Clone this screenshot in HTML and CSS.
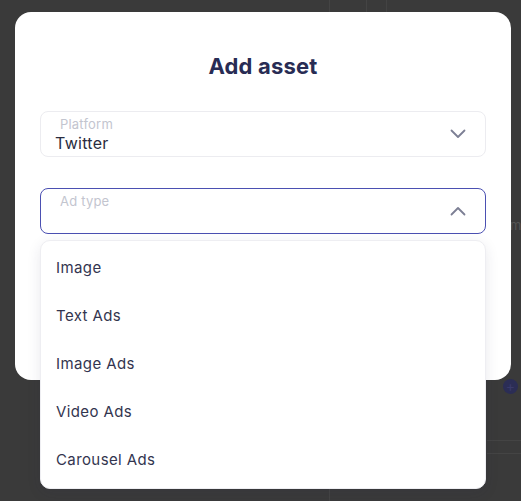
FILE: index.html
```html
<!DOCTYPE html>
<html>
<head>
<meta charset="utf-8">
<link rel="stylesheet" href="styles.css">
</head>
<body>
<div class="backdrop">
  <span class="bg-text">m</span>
  <span class="bg-plus">+</span>
</div>
<div class="modal">
  <h1 class="title">Add asset</h1>
  <div class="field">
    <div class="field-text">
      <span class="label">Platform</span>
      <span class="value">Twitter</span>
    </div>
    <svg class="chev" width="16" height="10" viewBox="0 0 16 10"><path d="M1.5 1.5 L8 8 L14.5 1.5" fill="none" stroke="#7c7f94" stroke-width="1.8" stroke-linecap="round" stroke-linejoin="round"/></svg>
  </div>
  <div class="field-wrap">
    <div class="field active">
      <div class="field-text">
        <span class="label">Ad type</span>
        <span class="value"></span>
      </div>
      <svg class="chev" width="16" height="10" viewBox="0 0 16 10"><path d="M1.5 8.5 L8 2 L14.5 8.5" fill="none" stroke="#7c7f94" stroke-width="1.8" stroke-linecap="round" stroke-linejoin="round"/></svg>
    </div>
    <ul class="menu">
      <li>Image</li>
      <li>Text Ads</li>
      <li>Image Ads</li>
      <li>Video Ads</li>
      <li>Carousel Ads</li>
    </ul>
  </div>
</div>
</body>
</html>
```
FILE: styles.css
```css
html, body {
  margin: 0;
  padding: 0;
}
body {
  width: 521px;
  height: 501px;
  overflow: hidden;
  font-family: "Inter", "Noto Sans", sans-serif;
  background-color: #3a3a3a;
  background-image:
    linear-gradient(#444444, #444444),
    linear-gradient(#444444, #444444),
    linear-gradient(#434343, #434343),
    linear-gradient(#444444, #444444),
    linear-gradient(#444444, #444444),
    linear-gradient(#444444, #444444);
  background-size:
    1px 12px,
    1px 12px,
    1px 12px,
    40px 1px,
    40px 1px,
    1px 20px;
  background-position:
    329px 0,
    366px 0,
    386px 0,
    487px 440px,
    487px 453px,
    329px 489px;
  background-repeat: no-repeat;
  position: relative;
  padding: 12px 0 0 15px;
  box-sizing: border-box;
}
.backdrop {
  position: absolute;
  inset: 0;
}
.bg-text {
  position: absolute;
  left: 510px;
  top: 217px;
  font-size: 13px;
  color: #555;
}
.bg-plus {
  position: absolute;
  left: 503px;
  top: 379px;
  width: 15px;
  height: 15px;
  border-radius: 50%;
  background: #2b2d55;
  color: #3a3a6a;
  font-size: 14px;
  line-height: 14px;
  text-align: center;
}
.modal {
  position: relative;
  width: 496px;
  height: 368px;
  background: #ffffff;
  border-radius: 16px;
  box-sizing: border-box;
  padding: 0 25px;
  display: flex;
  flex-direction: column;
}
.title {
  margin: 41px 0 0;
  height: 58px;
  font-size: 22px;
  line-height: 27px;
  font-weight: 700;
  color: #282c54;
  text-align: center;
  letter-spacing: 0.2px;
}
.field {
  height: 46px;
  box-sizing: border-box;
  border: 1px solid #ececf0;
  border-radius: 8px;
  display: flex;
  align-items: center;
  justify-content: space-between;
  padding: 0 19px 0 14px;
}
.field-text {
  display: flex;
  flex-direction: column;
  align-self: stretch;
  padding-top: 4px;
}
.label {
  font-size: 13px;
  line-height: 16px;
  color: #c3c5cf;
  padding-left: 5px;
  letter-spacing: 0.2px;
}
.value {
  font-size: 16px;
  line-height: 19px;
  color: #2a2c40;
  height: 19px;
  margin-top: 2px;
  letter-spacing: 0.3px;
}
.field-wrap {
  position: relative;
  margin-top: 31px;
}
.field.active {
  border-color: #4b50b2;
}
.field.active .chev {
  margin-top: -1px;
}
.menu {
  position: absolute;
  left: 0;
  right: 0;
  top: 52px;
  margin: 0;
  padding: 2px 0;
  list-style: none;
  background: #ffffff;
  border: 1px solid #eeeef2;
  border-radius: 10px;
  box-shadow: 0 4px 14px rgba(40, 40, 80, 0.10);
  box-sizing: border-box;
  height: 249px;
}
.menu li {
  height: 48px;
  display: flex;
  align-items: center;
  padding-left: 15px;
  font-size: 15px;
  color: #33354f;
  letter-spacing: 0.4px;
}
```
